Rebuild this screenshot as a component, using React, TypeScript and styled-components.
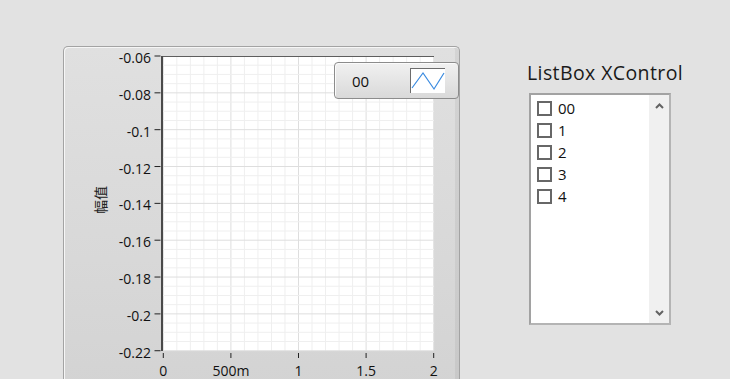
import React from 'react';
import styled, { createGlobalStyle } from 'styled-components';

const GlobalStyle = createGlobalStyle`
  html, body {
    margin: 0;
    padding: 0;
    background: #e2e2e2;
  }
  body {
    font-family: 'Open Sans', 'Noto Sans CJK SC', sans-serif;
    color: #111;
  }
`;

const Page = styled.div`
  display: flex;
  align-items: flex-start;
  gap: 67px;
  height: 379px;
  padding: 46px 0 0 63px;
  box-sizing: border-box;
  overflow: hidden;
`;

const GraphPanel = styled.div`
  position: relative;
  display: flex;
  align-items: flex-start;
  flex-shrink: 0;
  width: 397px;
  height: 345px;
  box-sizing: border-box;
  border: 1px solid #a3a3a3;
  border-bottom: none;
  border-radius: 5px 5px 0 0;
  background: linear-gradient(#e0e0e0, #d3d3d3);
  box-shadow: inset 1px 1px 0 #f6f6f6, inset -4px 0 0 rgba(0, 0, 0, 0.05);
`;

const YTitle = styled.div`
  display: flex;
  align-items: center;
  justify-content: flex-end;
  width: 46px;
  height: 295px;
  margin-top: 5px;
  padding-right: 1px;
  box-sizing: border-box;
`;

const YTitleText = styled.span`
  writing-mode: vertical-rl;
  text-orientation: sideways;
  transform: rotate(180deg);
  font-family: 'Noto Sans CJK SC', sans-serif;
  font-size: 14px;
  line-height: 18px;
  color: #222;
`;

const Chart = styled.svg`
  display: block;
  flex-shrink: 0;
  font-family: 'Open Sans', sans-serif;
  font-size: 14px;
`;

const Legend = styled.div`
  position: absolute;
  left: 270px;
  top: 15px;
  display: flex;
  align-items: center;
  justify-content: space-between;
  width: 125px;
  height: 37px;
  box-sizing: border-box;
  padding: 0 13px 0 17px;
  border: 1px solid #8c8c8c;
  border-radius: 4px;
  background: linear-gradient(#f1f1f1, #d9d9d9);
  box-shadow: inset 1px 1px 0 #fbfbfb;
  font-size: 15px;
`;

const PlotSwatch = styled.div`
  display: flex;
  width: 35px;
  height: 25px;
  box-sizing: border-box;
  background: #fff;
  border-top: 1px solid #6c6c6c;
  border-left: 1px solid #6c6c6c;
`;

const ListColumn = styled.div`
  display: flex;
  flex-direction: column;
  margin-top: 14px;
`;

const ListTitle = styled.div`
  font-size: 19.5px;
  line-height: 26px;
  letter-spacing: 0.4px;
  color: #1a1a1a;
  white-space: nowrap;
`;

const ListBox = styled.div`
  display: flex;
  width: 142px;
  height: 232px;
  margin: 7px 0 0 2px;
  box-sizing: border-box;
  border: 2px solid #a2a2a2;
  border-right-color: #b4b4b4;
  border-bottom-color: #b4b4b4;
  background: #fff;
`;

const Items = styled.div`
  flex: 1;
  display: flex;
  flex-direction: column;
  padding: 2px 0 0 6px;
`;

const Row = styled.div`
  display: flex;
  align-items: center;
  gap: 6px;
  height: 22px;
  font-size: 15px;
`;

const CheckBox = styled.span`
  width: 15px;
  height: 15px;
  box-sizing: border-box;
  border: 2px solid #676767;
  background: #fff;
`;

const ScrollBar = styled.div`
  display: flex;
  flex-direction: column;
  align-items: center;
  justify-content: space-between;
  width: 20px;
  padding: 8px 0 7px;
  box-sizing: border-box;
  background: #f0f0f0;
`;

const Chevron = ({ down }: { down?: boolean }) => (
  <svg width="9" height="6" viewBox="0 0 9 6">
    <polyline
      points={down ? '1,1 4.5,4.5 8,1' : '1,5 4.5,1.5 8,5'}
      fill="none"
      stroke="#636363"
      strokeWidth="2"
    />
  </svg>
);

// plot geometry in page coordinates
const PL = 162;
const PR = 434;
const PT = 56;
const PB = 351;
const X0 = 163.3;
const XSTEP = 67.6;
const YSTEP = 36.84;

const yLabels = ['-0.06', '-0.08', '-0.1', '-0.12', '-0.14', '-0.16', '-0.18', '-0.2', '-0.22'];
const xLabels = ['0', '500m', '1', '1.5', '2'];

const GraphChart = () => {
  const vMinor = Array.from({ length: 21 }, (_, i) => X0 + (XSTEP / 5) * i);
  const hMinor = Array.from({ length: 33 }, (_, i) => PT + (YSTEP / 4) * i);
  return (
    <Chart width={343} height={333} viewBox="110 47 343 333">
      <rect x={PL} y={PT} width={PR - PL} height={PB - PT} fill="#fff" />
      {vMinor.map((x, i) => (
        <line
          key={`v${i}`}
          x1={x}
          x2={x}
          y1={PT}
          y2={PB}
          stroke={i % 5 === 0 ? '#dedede' : '#efefef'}
          strokeWidth={1}
        />
      ))}
      {hMinor.map((y, i) => (
        <line
          key={`h${i}`}
          x1={PL}
          x2={PR}
          y1={y}
          y2={y}
          stroke={i % 4 === 0 ? '#dedede' : '#efefef'}
          strokeWidth={1}
        />
      ))}
      <line x1={PL} x2={PR} y1={PT + 0.5} y2={PT + 0.5} stroke="#5e5e5e" />
      <line x1={PL} x2={PL} y1={PT} y2={PB} stroke="#4a4a4a" strokeWidth={2} />
      {yLabels.map((label, i) => {
        const y = PT + YSTEP * i;
        return (
          <g key={label}>
            <line x1={154.5} x2={160.5} y1={y} y2={y} stroke="#222" />
            <text x={151} y={y + 7} textAnchor="end" fill="#111">
              {label}
            </text>
          </g>
        );
      })}
      {xLabels.map((label, i) => {
        const x = X0 + XSTEP * i;
        return (
          <g key={label}>
            <line x1={x} x2={x} y1={353} y2={358} stroke="#222" />
            <text x={x} y={376} textAnchor="middle" fill="#111">
              {label}
            </text>
          </g>
        );
      })}
    </Chart>
  );
};

const items = ['00', '1', '2', '3', '4'];

const App: React.FC = () => (
  <>
    <GlobalStyle />
    <Page>
      <GraphPanel>
        <YTitle>
          <YTitleText>幅值</YTitleText>
        </YTitle>
        <GraphChart />
        <Legend>
          <span>00</span>
          <PlotSwatch>
            <svg width="34" height="24" viewBox="0 0 34 24">
              <polyline
                points="1,19 12,4 23,20 33,4"
                fill="none"
                stroke="#3b8be0"
                strokeWidth="1.2"
              />
            </svg>
          </PlotSwatch>
        </Legend>
      </GraphPanel>
      <ListColumn>
        <ListTitle>ListBox XControl</ListTitle>
        <ListBox>
          <Items>
            {items.map((item) => (
              <Row key={item}>
                <CheckBox />
                <span>{item}</span>
              </Row>
            ))}
          </Items>
          <ScrollBar>
            <Chevron />
            <Chevron down />
          </ScrollBar>
        </ListBox>
      </ListColumn>
    </Page>
  </>
);

export default App;
